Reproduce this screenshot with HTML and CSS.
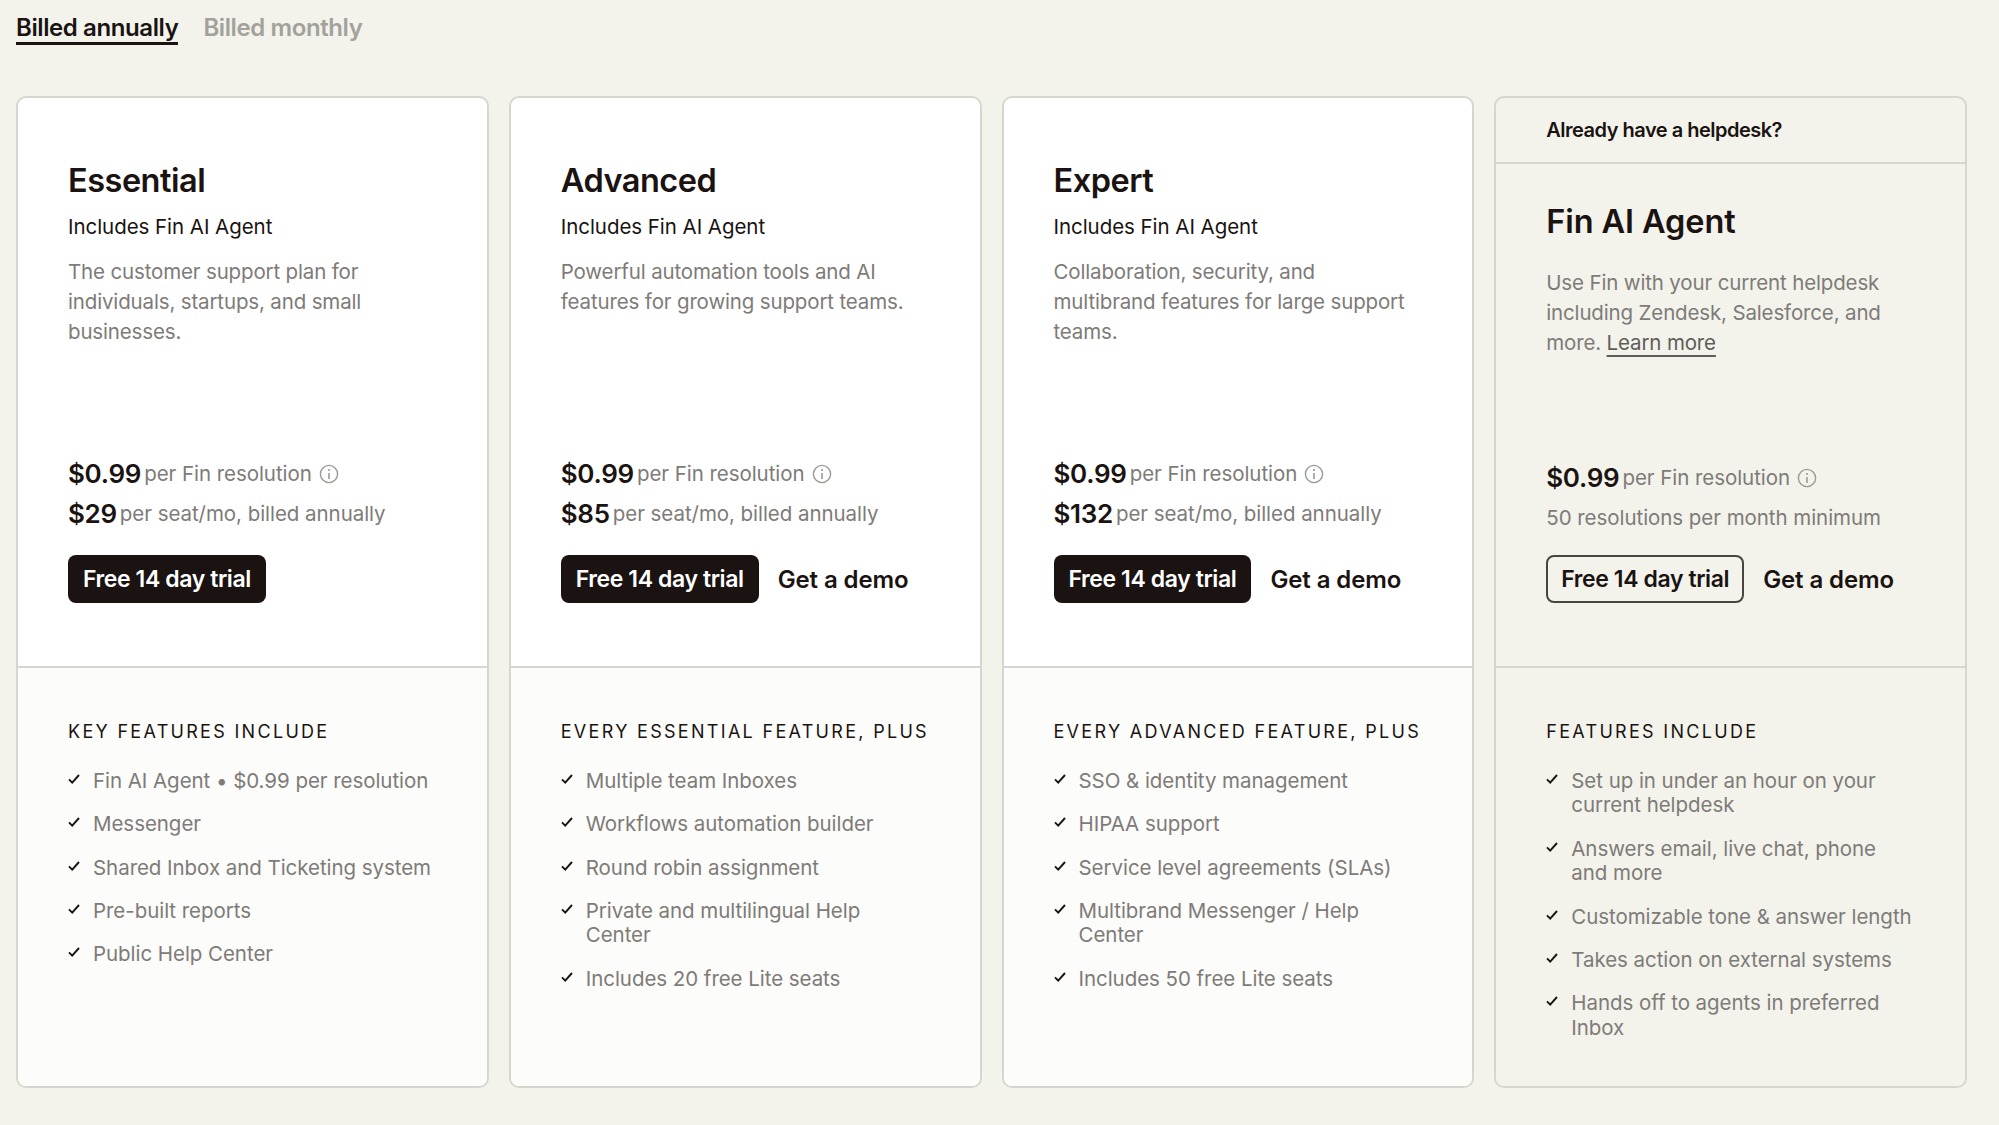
FILE: index.html
```html
<!DOCTYPE html>
<html lang="en">
<head>
<meta charset="utf-8">
<title>Pricing</title>
<link rel="stylesheet" href="styles.css">
</head>
<body>
<svg class="defs" width="0" height="0" aria-hidden="true">
  <symbol id="check" viewBox="0 0 12 10"><path d="M1 5.4 L4.2 8.6 L11 1" fill="none" stroke="currentColor" stroke-width="1.9"/></symbol>
  <symbol id="info" viewBox="0 0 20 20"><circle cx="10" cy="10" r="8.6" fill="none" stroke="currentColor" stroke-width="1.4"/><path d="M10 9 V15" stroke="currentColor" stroke-width="1.6"/><circle cx="10" cy="6" r="1.1" fill="currentColor"/></symbol>
</svg>
<div class="page">
  <nav class="tabs">
    <a class="tab tab-active">Billed annually</a>
    <a class="tab">Billed monthly</a>
  </nav>
  <main class="plans">
    <section class="card">
      <div class="top">
        <h2 class="name">Essential</h2>
        <p class="includes">Includes Fin AI Agent</p>
        <p class="desc">The customer support plan for individuals, startups, and small businesses.</p>
        <div class="prices">
          <p class="price"><b>$0.99</b> per Fin resolution <svg class="info"><use href="#info"/></svg></p>
          <p class="price"><b>$29</b> per seat/mo, billed annually</p>
        </div>
        <div class="actions"><a class="btn btn-solid">Free 14 day trial</a></div>
      </div>
      <div class="bottom">
        <h3 class="label">Key features include</h3>
        <ul class="list">
          <li class="item"><svg class="check"><use href="#check"/></svg><span>Fin AI Agent • $0.99 per resolution</span></li>
          <li class="item"><svg class="check"><use href="#check"/></svg><span>Messenger</span></li>
          <li class="item"><svg class="check"><use href="#check"/></svg><span>Shared Inbox and Ticketing system</span></li>
          <li class="item"><svg class="check"><use href="#check"/></svg><span>Pre-built reports</span></li>
          <li class="item"><svg class="check"><use href="#check"/></svg><span>Public Help Center</span></li>
        </ul>
      </div>
    </section>
    <section class="card">
      <div class="top">
        <h2 class="name">Advanced</h2>
        <p class="includes">Includes Fin AI Agent</p>
        <p class="desc">Powerful automation tools and AI features for growing support teams.</p>
        <div class="prices">
          <p class="price"><b>$0.99</b> per Fin resolution <svg class="info"><use href="#info"/></svg></p>
          <p class="price"><b>$85</b> per seat/mo, billed annually</p>
        </div>
        <div class="actions"><a class="btn btn-solid">Free 14 day trial</a><a class="demo">Get a demo</a></div>
      </div>
      <div class="bottom">
        <h3 class="label">Every Essential feature, plus</h3>
        <ul class="list">
          <li class="item"><svg class="check"><use href="#check"/></svg><span>Multiple team Inboxes</span></li>
          <li class="item"><svg class="check"><use href="#check"/></svg><span>Workflows automation builder</span></li>
          <li class="item"><svg class="check"><use href="#check"/></svg><span>Round robin assignment</span></li>
          <li class="item"><svg class="check"><use href="#check"/></svg><span>Private and multilingual Help Center</span></li>
          <li class="item"><svg class="check"><use href="#check"/></svg><span>Includes 20 free Lite seats</span></li>
        </ul>
      </div>
    </section>
    <section class="card">
      <div class="top">
        <h2 class="name">Expert</h2>
        <p class="includes">Includes Fin AI Agent</p>
        <p class="desc">Collaboration, security, and multibrand features for large support teams.</p>
        <div class="prices">
          <p class="price"><b>$0.99</b> per Fin resolution <svg class="info"><use href="#info"/></svg></p>
          <p class="price"><b>$132</b> per seat/mo, billed annually</p>
        </div>
        <div class="actions"><a class="btn btn-solid">Free 14 day trial</a><a class="demo">Get a demo</a></div>
      </div>
      <div class="bottom">
        <h3 class="label">Every Advanced feature, plus</h3>
        <ul class="list">
          <li class="item"><svg class="check"><use href="#check"/></svg><span>SSO &amp; identity management</span></li>
          <li class="item"><svg class="check"><use href="#check"/></svg><span>HIPAA support</span></li>
          <li class="item"><svg class="check"><use href="#check"/></svg><span>Service level agreements (SLAs)</span></li>
          <li class="item"><svg class="check"><use href="#check"/></svg><span>Multibrand Messenger / Help Center</span></li>
          <li class="item"><svg class="check"><use href="#check"/></svg><span>Includes 50 free Lite seats</span></li>
        </ul>
      </div>
    </section>
    <section class="card card-alt">
      <div class="banner">Already have a helpdesk?</div>
      <div class="top">
        <h2 class="name name-alt">Fin AI Agent</h2>
        <p class="desc desc-alt">Use Fin with your current helpdesk including Zendesk, Salesforce, and more. <a class="link">Learn more</a></p>
        <div class="prices">
          <p class="price"><b>$0.99</b> per Fin resolution <svg class="info"><use href="#info"/></svg></p>
          <p class="price">50 resolutions per month minimum</p>
        </div>
        <div class="actions"><a class="btn btn-outline">Free 14 day trial</a><a class="demo">Get a demo</a></div>
      </div>
      <div class="bottom">
        <h3 class="label">Features include</h3>
        <ul class="list">
          <li class="item"><svg class="check"><use href="#check"/></svg><span>Set up in under an hour on your current helpdesk</span></li>
          <li class="item"><svg class="check"><use href="#check"/></svg><span>Answers email, live chat, phone and more</span></li>
          <li class="item"><svg class="check"><use href="#check"/></svg><span>Customizable tone &amp; answer length</span></li>
          <li class="item"><svg class="check"><use href="#check"/></svg><span>Takes action on external systems</span></li>
          <li class="item"><svg class="check"><use href="#check"/></svg><span>Hands off to agents in preferred Inbox</span></li>
        </ul>
      </div>
    </section>
  </main>
</div>
</body>
</html>
```
FILE: styles.css
```css
* { box-sizing: border-box; }
html, body { margin: 0; height: 100%; }
body {
  background: #f3f3ec;
  color: #1a1311;
  font-family: Inter, "Liberation Sans", sans-serif;
  overflow: hidden;
}
.defs { position: absolute; }
p, h2, h3, ul { margin: 0; padding: 0; }
.page { padding: 0 32px 0 16px; }
.tabs { display: flex; gap: 25px; height: 96px; padding-top: 13px; align-items: flex-start; }
.tab {
  font-size: 24px;
  font-weight: 600;
  line-height: 29px;
  letter-spacing: -0.4px;
  color: #a3a19c;
}
.tab-active { color: #1a1311; border-bottom: 3px solid #1a1311; }
.plans {
  display: grid;
  grid-template-columns: repeat(4, 1fr);
  gap: 20px;
  height: 992px;
}
.card {
  display: flex;
  flex-direction: column;
  border: 2px solid #d6d6cf;
  border-radius: 10px;
  overflow: hidden;
  background: #fff;
}
.card-alt { background: #f3f3ec; }
.banner {
  flex: none;
  height: 66px;
  padding: 0 50px;
  border-bottom: 2px solid #d6d6cf;
  display: flex;
  align-items: center;
  font-size: 20px;
  font-weight: 600;
  letter-spacing: -0.5px;
}
.top {
  flex: 1;
  display: flex;
  flex-direction: column;
  padding: 63px 50px 63px;
}
.card-alt .top { padding-top: 38px; }
.name { font-size: 32.5px; font-weight: 600; line-height: 40px; letter-spacing: -0.5px; }
.name-alt { letter-spacing: -0.1px; }
.includes { font-size: 20.5px; line-height: 30px; margin-top: 11px; letter-spacing: -0.05px; }
.desc { font-size: 20.5px; line-height: 30px; margin-top: 15px; color: #7e7b78; letter-spacing: -0.15px; max-width: 360px; }
.desc-alt { margin-top: 26px; }
.link { color: #5f5c59; text-decoration: underline 2px; text-underline-offset: 5px; }
.prices { margin-top: auto; display: flex; flex-direction: column; gap: 10px; }
.card-alt .prices { margin-bottom: -4px; }
.price {
  font-size: 20.5px;
  line-height: 30px;
  color: #7e7b78;
  letter-spacing: -0.05px;
  display: flex;
  align-items: center;
  gap: 3px;
}
.price b { font-size: 26px; font-weight: 600; color: #1a1311; letter-spacing: -0.3px; }
.info { width: 20px; height: 20px; margin-left: 4px; color: #9c9a96; }
.actions { display: flex; align-items: center; gap: 19px; margin-top: 26px; }
.btn {
  display: flex;
  align-items: center;
  height: 48px;
  padding: 0 15px;
  border-radius: 8px;
  font-size: 23px;
  font-weight: 600;
  letter-spacing: -0.4px;
  white-space: nowrap;
}
.btn-solid { background: #1a1311; color: #fff; }
.btn-outline { border: 2px solid #4a4340; padding: 0 13px; }
.demo { font-size: 24px; font-weight: 600; letter-spacing: -0.1px; white-space: nowrap; }
.bottom {
  flex: none;
  height: 420px;
  border-top: 2px solid #d6d6cf;
  background: #fcfcfa;
  padding: 52px 50px 0;
}
.card-alt .bottom { background: #f3f3ec; }
.label {
  font-size: 18px;
  font-weight: 400;
  line-height: 24px;
  letter-spacing: 2.3px;
  text-transform: uppercase;
  white-space: nowrap;
}
.list { list-style: none; display: flex; flex-direction: column; gap: 18.95px; margin-top: 25px; }
.item {
  display: flex;
  gap: 13px;
  font-size: 20.5px;
  line-height: 24.4px;
  color: #7e7b78;
  letter-spacing: -0.05px;
}
.check { flex: none; width: 12px; height: 10px; margin-top: 5px; color: #1a1311; }
```
